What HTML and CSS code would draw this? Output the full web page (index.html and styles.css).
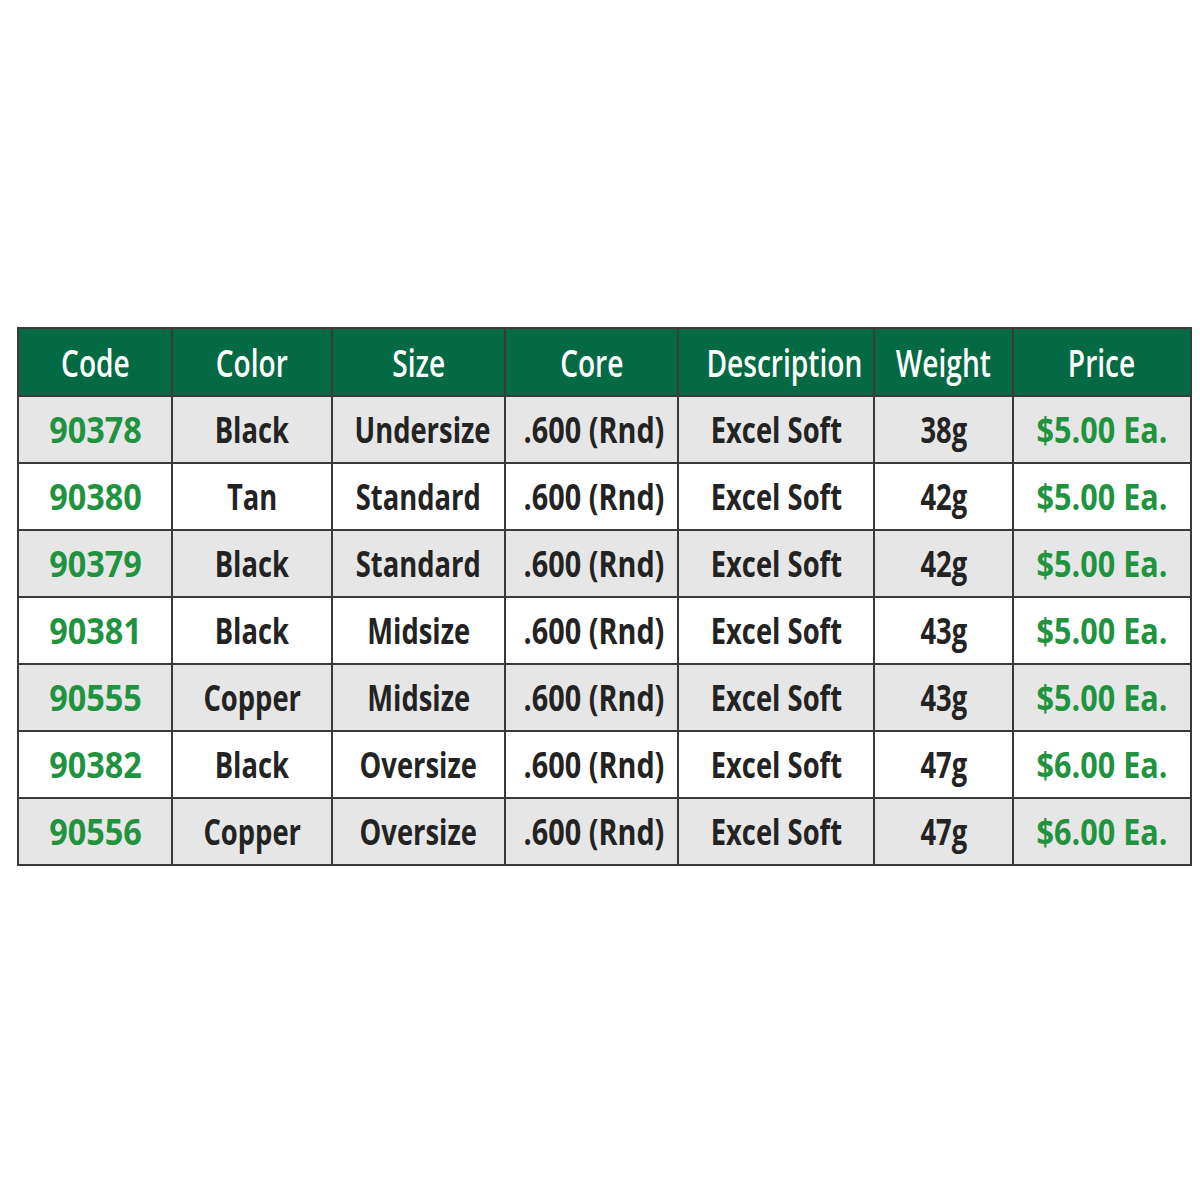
FILE: index.html
```html
<!DOCTYPE html>
<html>
<head>
<meta charset="utf-8">
<link rel="stylesheet" href="styles.css">
</head>
<body>
<div class="page">
<table class="specs">
<colgroup>
<col class="c1"><col class="c2"><col class="c3"><col class="c4"><col class="c5"><col class="c6"><col class="c7">
</colgroup>
<thead>
<tr><th><span class="t">Code</span></th><th><span class="t">Color</span></th><th><span class="t">Size</span></th><th><span class="t">Core</span></th><th><span class="t">Description</span></th><th><span class="t">Weight</span></th><th><span class="t">Price</span></th></tr>
</thead>
<tbody>
<tr class="alt"><td class="code"><span class="t">90378</span></td><td><span class="t">Black</span></td><td><span class="t">Undersize</span></td><td class="core"><span class="t">.600 (Rnd)</span></td><td><span class="t">Excel Soft</span></td><td><span class="t">38g</span></td><td class="price"><span class="t">$5.00 Ea.</span></td></tr>
<tr><td class="code"><span class="t">90380</span></td><td><span class="t">Tan</span></td><td><span class="t">Standard</span></td><td class="core"><span class="t">.600 (Rnd)</span></td><td><span class="t">Excel Soft</span></td><td><span class="t">42g</span></td><td class="price"><span class="t">$5.00 Ea.</span></td></tr>
<tr class="alt"><td class="code"><span class="t">90379</span></td><td><span class="t">Black</span></td><td><span class="t">Standard</span></td><td class="core"><span class="t">.600 (Rnd)</span></td><td><span class="t">Excel Soft</span></td><td><span class="t">42g</span></td><td class="price"><span class="t">$5.00 Ea.</span></td></tr>
<tr><td class="code"><span class="t">90381</span></td><td><span class="t">Black</span></td><td><span class="t">Midsize</span></td><td class="core"><span class="t">.600 (Rnd)</span></td><td><span class="t">Excel Soft</span></td><td><span class="t">43g</span></td><td class="price"><span class="t">$5.00 Ea.</span></td></tr>
<tr class="alt"><td class="code"><span class="t">90555</span></td><td><span class="t">Copper</span></td><td><span class="t">Midsize</span></td><td class="core"><span class="t">.600 (Rnd)</span></td><td><span class="t">Excel Soft</span></td><td><span class="t">43g</span></td><td class="price"><span class="t">$5.00 Ea.</span></td></tr>
<tr><td class="code"><span class="t">90382</span></td><td><span class="t">Black</span></td><td><span class="t">Oversize</span></td><td class="core"><span class="t">.600 (Rnd)</span></td><td><span class="t">Excel Soft</span></td><td><span class="t">47g</span></td><td class="price"><span class="t">$6.00 Ea.</span></td></tr>
<tr class="alt"><td class="code"><span class="t">90556</span></td><td><span class="t">Copper</span></td><td><span class="t">Oversize</span></td><td class="core"><span class="t">.600 (Rnd)</span></td><td><span class="t">Excel Soft</span></td><td><span class="t">47g</span></td><td class="price"><span class="t">$6.00 Ea.</span></td></tr>
</tbody>
</table>
</div>
</body>
</html>
```
FILE: styles.css
```css
html, body {
  margin: 0;
  padding: 0;
  background: #ffffff;
}
.page {
  padding: 327px 0 0 17px;
}
.specs {
  border-collapse: collapse;
  table-layout: fixed;
  width: 1173px;
  font-family: "Open Sans", "Liberation Sans", sans-serif;
  color: #232323;
  border: 2px solid #3a3a3a;
}
.c1 { width: 154px; }
.c2 { width: 160px; }
.c3 { width: 173px; }
.c4 { width: 173px; }
.c5 { width: 196px; }
.c6 { width: 139px; }
.c7 { width: 178px; }
.specs th, .specs td {
  border: 2px solid #3a3a3a;
  text-align: center;
  vertical-align: middle;
  padding: 0;
  white-space: nowrap;
  overflow: visible;
}
.specs th {
  height: 66px;
  background: #046a44;
  color: #ffffff;
  font-size: 38px;
  font-weight: 600;
}
.specs th .t {
  transform: scaleX(0.74);
}
.specs td {
  height: 65px;
  font-size: 36px;
  font-weight: 700;
  background: #ffffff;
}
.specs td .t {
  transform: scaleX(0.76);
}
.specs td.core .t {
  transform: scaleX(0.8);
}
.specs td.code .t {
  transform: scaleX(0.9);
}
.specs td.price .t {
  transform: scaleX(0.85);
}
.specs tr.alt td {
  background: #e6e6e6;
}
.specs td.code, .specs td.price {
  color: #1f9340;
}
.t {
  display: inline-block;
  line-height: 1;
}
```
